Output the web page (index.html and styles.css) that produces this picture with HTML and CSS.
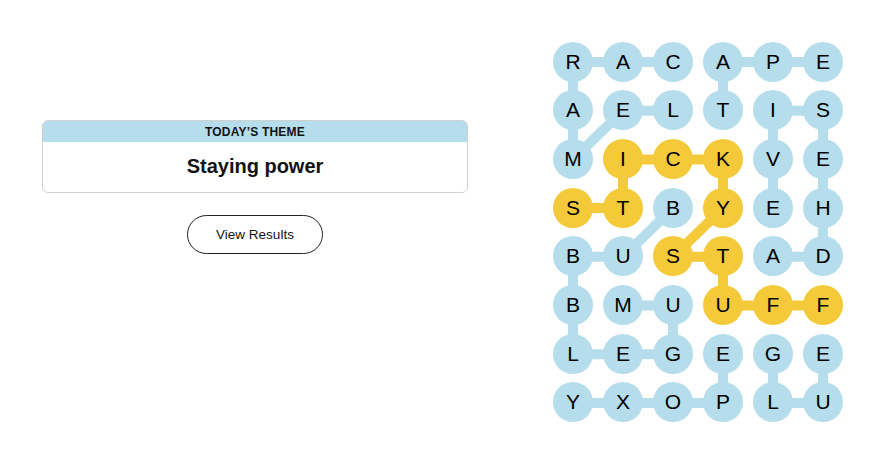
FILE: index.html
```html
<!DOCTYPE html>
<html lang="en">
<head>
    <meta charset="UTF-8">
    <meta name="viewport" content="width=device-width, initial-scale=1.0">
    <title>Strands</title>
    <link rel="stylesheet" href="styles.css">
</head>
<body>
    <main class="page">
        <section class="side">
            <div class="theme-card">
                <h2 class="theme-label">Today&rsquo;s Theme</h2>
                <p class="theme-text">Staying power</p>
            </div>
            <button class="results-btn">View Results</button>
        </section>

        <section class="board">
            <!-- word paths, drawn under the letters -->
            <svg class="links" width="290" height="381" viewBox="0 0 290 381">
                <polyline class="found" points="120,20 20,20 20,117.4 70,68.7 120,68.7"/>
                <polyline class="found" points="170,68.7 170,20 270,20"/>
                <polyline class="found" points="220,214.8 270,214.8 270,68.7 220,68.7 220,166.1"/>
                <polyline class="found" points="120,166.1 70,214.8 20,214.8 20,312.2 120,312.2 120,263.5 70,263.5"/>
                <polyline class="found" points="170,312.2 170,360.9 20,360.9"/>
                <polyline class="found" points="220,312.2 220,360.9 270,360.9 270,312.2"/>
                <polyline class="spangram" points="20,166.1 70,166.1 70,117.4 170,117.4 170,166.1 120,214.8 170,214.8 170,263.5 270,263.5"/>
            </svg>

            <div class="grid">
                <span class="cell">R</span><span class="cell">A</span><span class="cell">C</span><span class="cell">A</span><span class="cell">P</span><span class="cell">E</span>
                <span class="cell">A</span><span class="cell">E</span><span class="cell">L</span><span class="cell">T</span><span class="cell">I</span><span class="cell">S</span>
                <span class="cell">M</span><span class="cell span">I</span><span class="cell span">C</span><span class="cell span">K</span><span class="cell">V</span><span class="cell">E</span>
                <span class="cell span">S</span><span class="cell span">T</span><span class="cell">B</span><span class="cell span">Y</span><span class="cell">E</span><span class="cell">H</span>
                <span class="cell">B</span><span class="cell">U</span><span class="cell span">S</span><span class="cell span">T</span><span class="cell">A</span><span class="cell">D</span>
                <span class="cell">B</span><span class="cell">M</span><span class="cell">U</span><span class="cell span">U</span><span class="cell span">F</span><span class="cell span">F</span>
                <span class="cell">L</span><span class="cell">E</span><span class="cell">G</span><span class="cell">E</span><span class="cell">G</span><span class="cell">E</span>
                <span class="cell">Y</span><span class="cell">X</span><span class="cell">O</span><span class="cell">P</span><span class="cell">L</span><span class="cell">U</span>
            </div>
        </section>
    </main>
</body>
</html>
```

FILE: styles.css
```css
body{
    margin: 0;
    font-family: "Liberation Sans", Arial, Helvetica, sans-serif;
    color: #121212;
    background-color: #fff;
}
.page{
    display: flex;
    justify-content: space-between;
    align-items: center;
    height: 464px;
    padding: 0 43px 0 42px;
    box-sizing: border-box;
}
.side{
    align-self: flex-start;
    width: 426px;
    padding-top: 120px;
    display: flex;
    flex-direction: column;
    align-items: center;
    gap: 22px;
}
.theme-card{
    width: 100%;
    box-sizing: border-box;
    border: 1px solid #d0d0d0;
    border-radius: 6px;
    overflow: hidden;
    text-align: center;
}
.theme-label{
    margin: 0;
    height: 21px;
    line-height: 22px;
    background-color: #b5ddec;
    font-size: 12px;
    font-weight: bold;
    letter-spacing: 0.2px;
    text-transform: uppercase;
}
.theme-text{
    margin: 0;
    height: 50px;
    line-height: 49px;
    font-size: 20px;
    font-weight: bold;
}
.results-btn{
    width: 136px;
    height: 39px;
    border: 1px solid #222;
    border-radius: 20px;
    background-color: #fff;
    color: #121212;
    font-family: inherit;
    font-size: 13.5px;
    cursor: pointer;
}
.board{
    position: relative;
    width: 290px;
    height: 381px;
}
.links{
    position: absolute;
    top: 0;
    left: 0;
}
.links polyline{
    fill: none;
    stroke-width: 10;
    stroke-linejoin: round;
}
.links .found{
    stroke: #b5ddec;
}
.links .spangram{
    stroke: #f4ca3b;
}
.grid{
    position: relative;
    display: grid;
    grid-template-columns: repeat(6, 40px);
    grid-auto-rows: 40px;
    column-gap: 10px;
    row-gap: 8.7px;
}
.cell{
    width: 40px;
    height: 40px;
    border-radius: 50%;
    background-color: #b5ddec;
    display: flex;
    align-items: center;
    justify-content: center;
    font-size: 21px;
    color: #000;
}
.cell.span{
    background-color: #f4ca3b;
}
```
